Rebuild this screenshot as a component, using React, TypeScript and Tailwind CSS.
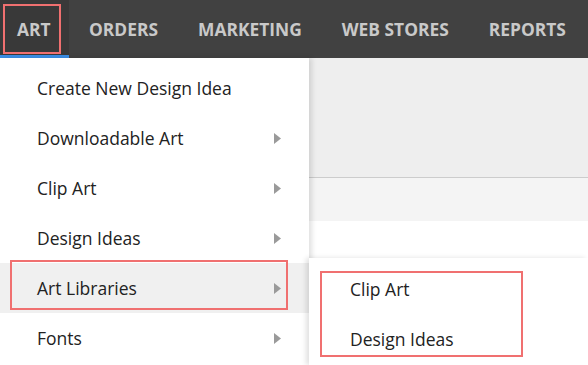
const NAV = ["ORDERS", "MARKETING", "WEB STORES", "REPORTS"];

const MENU = [
  { label: "Create New Design Idea", sub: false },
  { label: "Downloadable Art", sub: true },
  { label: "Clip Art", sub: true },
  { label: "Design Ideas", sub: true },
  { label: "Art Libraries", sub: true, active: true },
  { label: "Fonts", sub: true },
];

const Caret = () => (
  <svg width="7" height="11" viewBox="0 0 7 11" className="shrink-0">
    <path d="M0 0 L7 5.5 L0 11 Z" fill="#9a9a9a" />
  </svg>
);

const App = () => {
  return (
    <div
      className="relative w-[588px] h-[365px] overflow-hidden bg-white"
      style={{ fontFamily: '"Open Sans", "Liberation Sans", sans-serif' }}
    >
      <nav className="flex h-[58px] bg-[#414141] text-[17.4px] font-bold text-[#c9c9c9] whitespace-nowrap">
        <div className="flex items-center shrink-0 h-full w-[69px] pl-[17px] bg-[#393939] border-b-[3px] border-[#3a8ee6] pt-[4px]">
          ART
        </div>
        {NAV.map((n) => (
          <div key={n} className="flex items-center shrink-0 h-full px-5 pt-[1px]">
            {n}
          </div>
        ))}
      </nav>

      <div className="h-[120px] bg-[#eeeeee] border-b border-[#cccccc]" />
      <div className="h-[43px] bg-[#f4f4f4]" />

      {/* main dropdown */}
      <div className="absolute left-0 top-[58px] bottom-0 w-[309px] bg-white shadow-[3px_0_5px_rgba(0,0,0,0.12)] pt-[5px]">
        {MENU.map((m) => (
          <div
            key={m.label}
            className={`flex items-center justify-between h-[50px] pl-[37px] pr-[28px] text-[17.5px] text-[#222] ${
              m.active ? "bg-[#f0f0f0]" : ""
            }`}
          >
            <span>{m.label}</span>
            {m.sub && <Caret />}
          </div>
        ))}
      </div>

      {/* sub dropdown */}
      <div className="absolute left-[309px] top-[258px] right-0 bottom-0 bg-white shadow-[-3px_0_5px_rgba(0,0,0,0.12)] pt-[6px]">
        {["Clip Art", "Design Ideas"].map((s) => (
          <div key={s} className="flex items-center h-[50px] pl-[41px] text-[17.5px] text-[#222]">
            {s}
          </div>
        ))}
      </div>

      {/* annotation boxes */}
      <div className="absolute left-[3px] top-[4px] w-[58px] h-[50px] border-2 border-[#f07070]" />
      <div className="absolute left-[10px] top-[260px] w-[278px] h-[50px] border-2 border-[#f07070]" />
      <div className="absolute left-[320px] top-[271px] w-[203px] h-[86px] border-2 border-[#f07070]" />
    </div>
  );
};

export default App;
